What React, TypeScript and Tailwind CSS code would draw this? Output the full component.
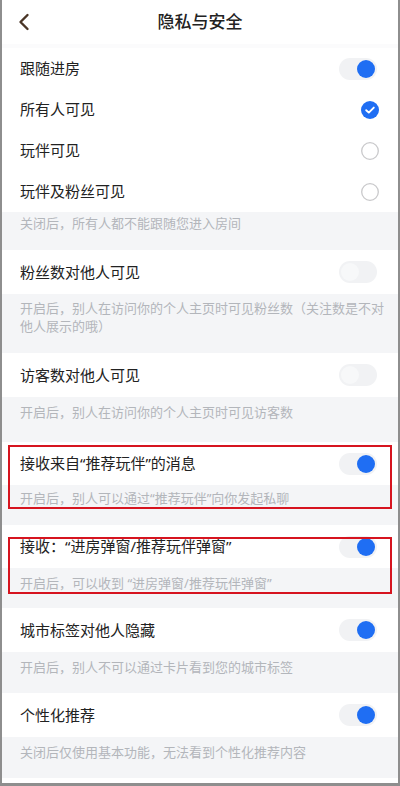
import React from 'react';

const font = { fontFamily: '"Noto Sans", "Noto Sans CJK SC", sans-serif' };

function Toggle({ on }: { on: boolean }) {
  return (
    <div className="w-[38px] h-[22px] rounded-full bg-[#f1f2f4] flex items-center px-[2px]">
      {on ? (
        <div className="ml-auto w-[18px] h-[18px] rounded-full bg-[#1f6ef3]" />
      ) : (
        <div className="w-[18px] h-[18px] rounded-full bg-[#f7f8f9]" />
      )}
    </div>
  );
}

function Radio({ checked }: { checked: boolean }) {
  if (checked) {
    return (
      <svg width="18" height="18" viewBox="0 0 18 18">
        <circle cx="9" cy="9" r="9" fill="#1f6ef3" />
        <path d="M5.2 9.2 L7.8 11.6 L12.8 6.6" fill="none" stroke="#fff" strokeWidth="1.9" strokeLinecap="round" strokeLinejoin="round" />
      </svg>
    );
  }
  return (
    <svg width="18" height="18" viewBox="0 0 18 18">
      <circle cx="9" cy="9" r="8.3" fill="none" stroke="#c9c9cb" strokeWidth="1.3" />
    </svg>
  );
}

function Row({ title, h, right }: { title: string; h: string; right: React.ReactNode }) {
  return (
    <div className={`${h} bg-white flex items-center justify-between pl-[18px] pr-[21px]`}>
      <span className="text-[15px] text-[#222]">{title}</span>
      {right}
    </div>
  );
}

function Desc({ text, h, pt }: { text: string; h: string; pt: string }) {
  return (
    <div className={`${h} ${pt} bg-[#f4f5f7] pl-[18px] pr-[13px]`}>
      <p className="text-[13px] leading-[18px] text-[#b3b6bb]">{text}</p>
    </div>
  );
}

export default function App() {
  return (
    <div
      className="relative h-[786px] w-[400px] overflow-hidden bg-white border-l-2 border-r-2 border-b-[3px] border-[#8e8e8e]"
      style={font}
    >
      {/* Header */}
      <div className="h-[44px] relative flex items-center justify-center">
        <svg className="absolute left-[15px] top-[13px]" width="14" height="18" viewBox="0 0 14 18">
          <path d="M10.5 2 L3.5 9 L10.5 16" fill="none" stroke="#4a3526" strokeWidth="2.4" strokeLinecap="round" strokeLinejoin="round" />
        </svg>
        <h1 className="text-[17px] font-medium text-[#222]">隐私与安全</h1>
      </div>
      <div className="h-[4px] bg-[#fbfbfc]" />

      <Row title="跟随进房" h="h-[41px]" right={<Toggle on />} />
      <Row title="所有人可见" h="h-[41px]" right={<div className="mr-[-2px]"><Radio checked /></div>} />
      <Row title="玩伴可见" h="h-[41px]" right={<div className="mr-[-2px]"><Radio checked={false} /></div>} />
      <Row title="玩伴及粉丝可见" h="h-[41px]" right={<div className="mr-[-2px]"><Radio checked={false} /></div>} />
      <Desc text="关闭后，所有人都不能跟随您进入房间" h="h-[38px]" pt="pt-[2px]" />

      <Row title="粉丝数对他人可见" h="h-[44px]" right={<Toggle on={false} />} />
      <Desc text="开启后，别人在访问你的个人主页时可见粉丝数（关注数是不对他人展示的哦）" h="h-[59px]" pt="pt-[5px]" />

      <Row title="访客数对他人可见" h="h-[44px]" right={<Toggle on={false} />} />
      <Desc text="开启后，别人在访问你的个人主页时可见访客数" h="h-[45px]" pt="pt-[6px]" />

      <Row title="接收来自“推荐玩伴”的消息" h="h-[43px]" right={<Toggle on />} />
      <Desc text="开启后，别人可以通过“推荐玩伴”向你发起私聊" h="h-[40px]" pt="pt-[4px]" />

      <Row title="接收：“进房弹窗/推荐玩伴弹窗”" h="h-[43px]" right={<Toggle on />} />
      <Desc text="开启后，可以收到 “进房弹窗/推荐玩伴弹窗”" h="h-[40px]" pt="pt-[6px]" />

      <Row title="城市标签对他人隐藏" h="h-[44px]" right={<Toggle on />} />
      <Desc text="开启后，别人不可以通过卡片看到您的城市标签" h="h-[41px]" pt="pt-[6px]" />

      <Row title="个性化推荐" h="h-[44px]" right={<Toggle on />} />
      <Desc text="关闭后仅使用基本功能，无法看到个性化推荐内容" h="h-[41px]" pt="pt-[6px]" />

      {/* Highlight boxes */}
      <div className="absolute left-[6px] top-[445px] w-[384px] h-[64px] border-2 border-[#d6141f]" />
      <div className="absolute left-[6px] top-[537px] w-[384px] h-[57px] border-2 border-[#d6141f]" />
    </div>
  );
}
